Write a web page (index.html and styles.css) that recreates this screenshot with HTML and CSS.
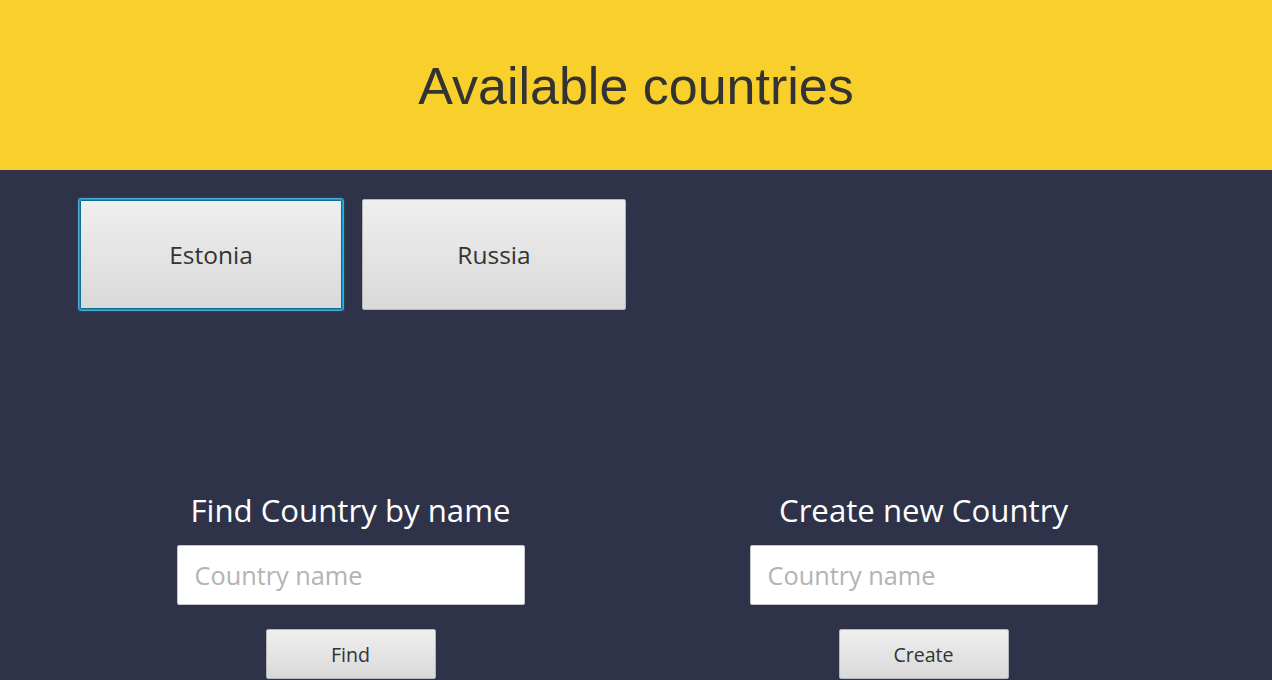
FILE: index.html
```html
<!DOCTYPE html>
<html>
<head>
<meta charset="utf-8">
<link rel="stylesheet" href="styles.css">
</head>
<body>
<header class="header">
  <h1 class="title">Available countries</h1>
</header>
<main class="main">
  <div class="country-list">
    <button class="country-btn focused">Estonia</button>
    <button class="country-btn">Russia</button>
  </div>
  <div class="forms">
    <section class="form">
      <h2 class="form-title">Find Country by name</h2>
      <input class="field" type="text" placeholder="Country name">
      <button class="action-btn">Find</button>
    </section>
    <section class="form">
      <h2 class="form-title">Create new Country</h2>
      <input class="field" type="text" placeholder="Country name">
      <button class="action-btn">Create</button>
    </section>
  </div>
</main>
</body>
</html>
```
FILE: styles.css
```css
html, body {
  margin: 0;
  padding: 0;
  height: 100%;
  background: #2f3349;
  overflow: hidden;
}
body {
  font-family: "Open Sans", "Noto Sans", sans-serif;
}
.header {
  height: 170px;
  background: #f9cf2b;
  display: flex;
  justify-content: center;
}
.title {
  margin: 0;
  padding-top: 56px;
  font-family: "Liberation Sans", Arial, sans-serif;
  font-weight: normal;
  font-size: 52px;
  line-height: 60px;
  color: #333333;
}
.main {
  display: flex;
  flex-direction: column;
}
.country-list {
  display: flex;
  gap: 19px;
  padding: 29px 0 0 79px;
}
.country-btn {
  width: 264px;
  height: 111px;
  border: 1px solid #b5b5b5;
  border-radius: 2px;
  background: linear-gradient(#efefef, #d9d9d9);
  font-family: "Open Sans", "Noto Sans", sans-serif;
  font-size: 24.5px;
  color: #333333;
  padding: 0;
}
.country-btn.focused {
  border: 1px solid #039ed3;
  box-shadow: 0 0 0 1px #0f6f93 inset, 0 0 1px 1px #4fb6e0;
}
.forms {
  display: grid;
  grid-template-columns: 573px 573px;
  padding: 180px 0 0 64px;
}
.form {
  display: flex;
  flex-direction: column;
  align-items: center;
}
.form-title {
  margin: 0;
  font-weight: normal;
  font-size: 31.2px;
  line-height: 40px;
  color: #ffffff;
}
.field {
  box-sizing: border-box;
  margin-top: 15px;
  width: 348px;
  height: 60px;
  border: 1px solid #c8c8c8;
  border-radius: 2px;
  background: #ffffff;
  padding: 0 17px;
  font-family: "Open Sans", "Noto Sans", sans-serif;
  font-size: 25.3px;
  color: #333333;
  outline: none;
}
.field::placeholder {
  color: #b3b3b3;
}
.action-btn {
  margin-top: 24px;
  width: 170px;
  height: 50px;
  border: 1px solid #b5b5b5;
  border-radius: 2px;
  background: linear-gradient(#efefef, #d9d9d9);
  font-family: "Open Sans", "Noto Sans", sans-serif;
  font-size: 19.6px;
  color: #333333;
  padding: 0;
}
```
